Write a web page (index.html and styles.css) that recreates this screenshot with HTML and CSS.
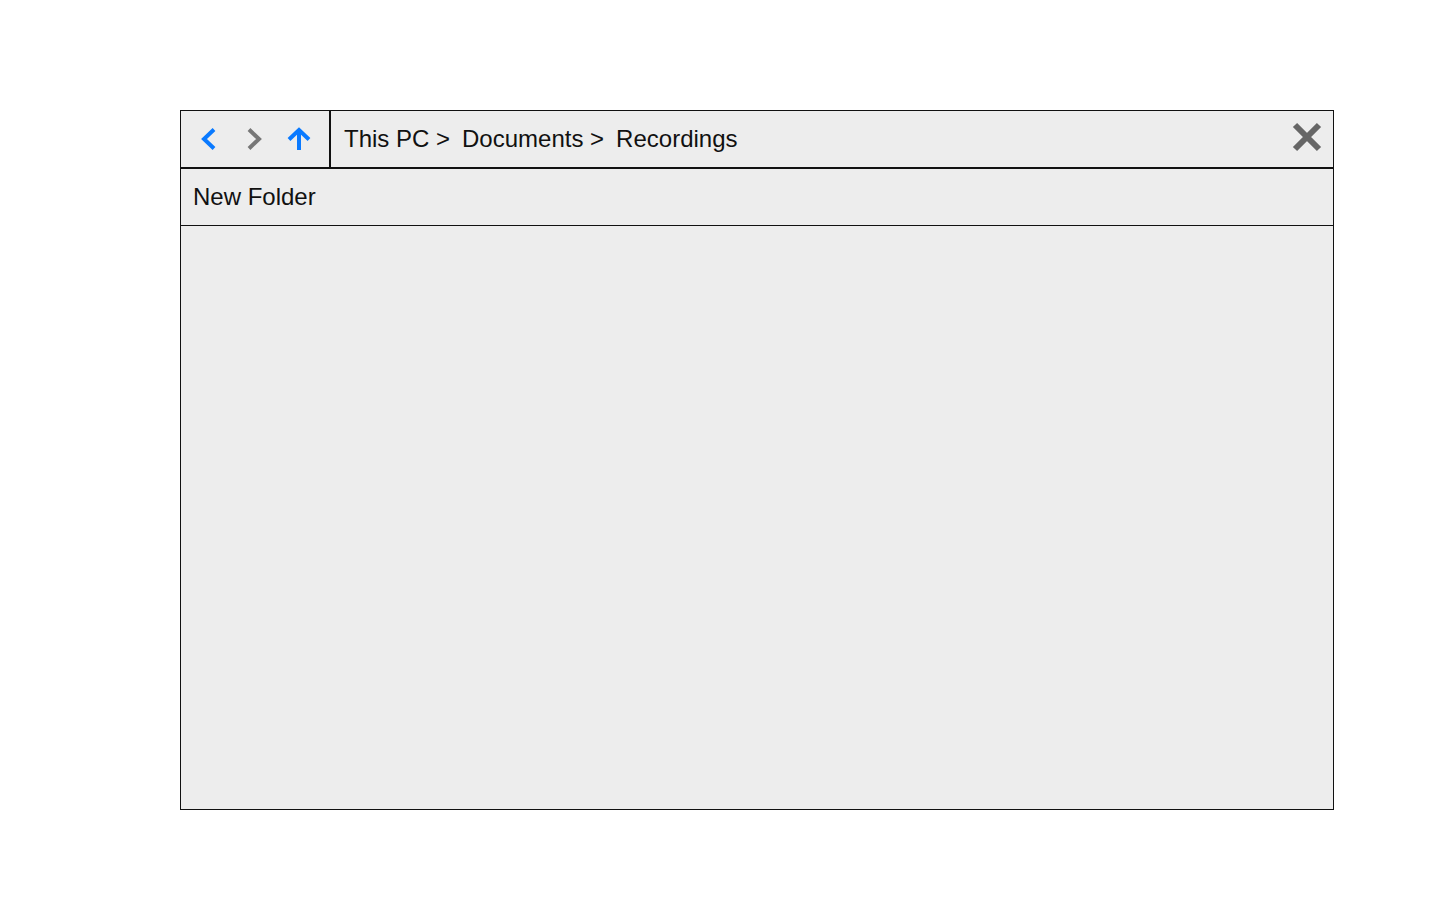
FILE: index.html
```html
<!DOCTYPE html>
<html lang="en">
<head>
<meta charset="utf-8">
<title>File Explorer</title>
<link rel="stylesheet" href="styles.css">
</head>
<body>
<div class="window">
  <div class="header">
    <div class="nav">
      <svg class="icon back" width="24" height="24" viewBox="0 0 24 24"><polyline points="18,2.5 8,12 18,21.5" fill="none" stroke="#0a7aff" stroke-width="4"/></svg>
      <svg class="icon fwd" width="24" height="24" viewBox="0 0 24 24"><polyline points="6,2.5 16,12 6,21.5" fill="none" stroke="#777777" stroke-width="4"/></svg>
      <svg class="icon up" width="24" height="24" viewBox="0 0 24 24"><path d="M12 23 V4 M2 12.5 L12 3 L22 12.5" fill="none" stroke="#0a7aff" stroke-width="4"/></svg>
    </div>
    <div class="crumbs">
      <span class="crumb">This PC &gt;</span>
      <span class="crumb">Documents &gt;</span>
      <span class="crumb">Recordings</span>
    </div>
    <svg class="close" width="30" height="30" viewBox="0 0 30 30"><path d="M3 3 L27 27 M27 3 L3 27" fill="none" stroke="#666666" stroke-width="6"/></svg>
  </div>
  <div class="toolbar">New Folder</div>
  <div class="content"></div>
</div>
</body>
</html>
```
FILE: styles.css
```css
html, body {
  margin: 0;
  padding: 0;
  background: #ffffff;
}
body {
  font-family: "Liberation Sans", Arial, sans-serif;
  color: #111111;
  padding: 110px 0 0 180px;
}
.window {
  box-sizing: border-box;
  width: 1154px;
  height: 700px;
  border: 1px solid #111111;
  background: #ededed;
  display: flex;
  flex-direction: column;
}
.header {
  box-sizing: border-box;
  height: 57px;
  border-bottom: 1px solid #111111;
  display: flex;
  align-items: stretch;
}
.nav {
  box-sizing: border-box;
  width: 149px;
  border-right: 1px solid #111111;
  display: flex;
  align-items: center;
  padding-left: 15px;
}
.icon { display: block; }
.fwd { margin-left: 23px; }
.up { margin-left: 20px; }
.crumbs {
  flex: 1;
  border-left: 1px solid #111111;
  display: flex;
  align-items: center;
  gap: 12px;
  padding-left: 13px;
  font-size: 24px;
}
.close {
  align-self: center;
  margin: 0 11px 4px 0;
  display: block;
}
.toolbar {
  box-sizing: border-box;
  height: 58px;
  border-top: 1px solid #111111;
  border-bottom: 1px solid #111111;
  display: flex;
  align-items: center;
  padding-left: 12px;
  font-size: 24px;
}
.content {
  flex: 1;
}
```
